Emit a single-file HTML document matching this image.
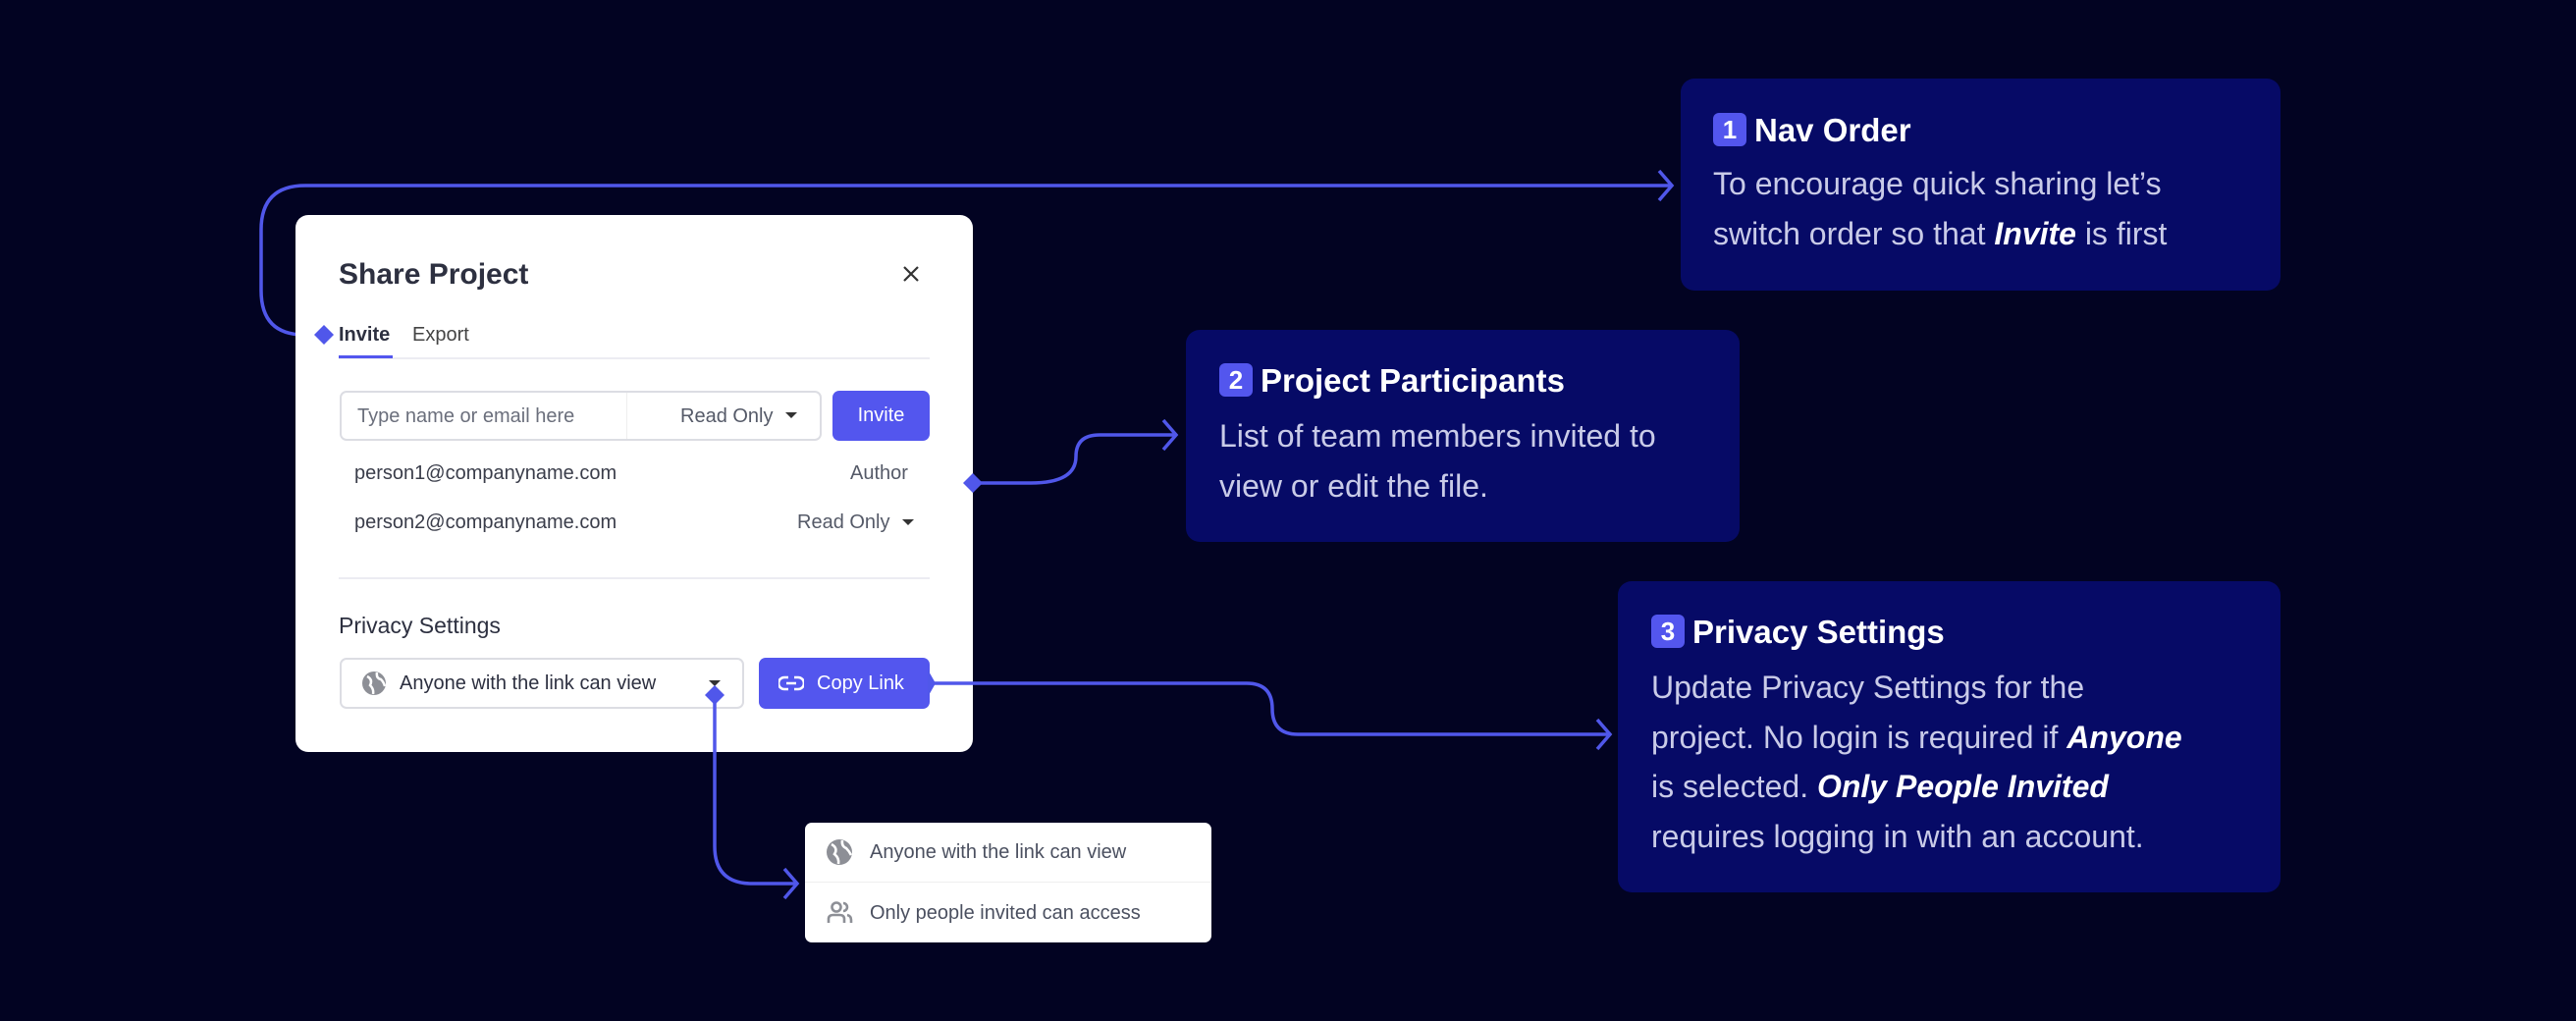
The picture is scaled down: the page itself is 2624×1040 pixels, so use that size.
<!DOCTYPE html>
<html><head><meta charset="utf-8"><style>
*{box-sizing:border-box;margin:0;padding:0}
body{width:2624px;height:1040px;background:#020322;font-family:"Liberation Sans",sans-serif;position:relative;overflow:hidden}
.a{position:absolute}
.modal{left:301px;top:219px;width:690px;height:547px;background:#fff;border-radius:13px}
.t{white-space:nowrap;line-height:1}
.card{background:#060a66;border-radius:14px}
.badge{display:inline-block;background:#5356ee;color:#fff;border-radius:6px;width:34px;height:34px;text-align:center;line-height:34px;font-size:26px;font-weight:bold;vertical-align:middle;margin-right:8px;position:relative;top:-3px}
.ct{color:#fff;font-weight:bold;font-size:33px}
.cb{color:#c9cbe8;font-size:32px;line-height:50.5px}
.cb b{color:#fff;font-style:italic}
.g{color:#4b5060;font-size:20px}
</style></head><body>
<svg class="a" style="left:0;top:0" width="2624" height="1040">
<g fill="none" stroke="#5057ea" stroke-width="3.5">
<path d="M330 341 H310 Q266 341 266 296 V234 Q266 189 311 189 H1703"/>
<path d="M1690 174 L1703 189 L1690 204"/>
<path d="M991 492 H1050 Q1096 492 1096 465 Q1096 443 1120 443 H1198"/>
<path d="M1185 428 L1198 443 L1185 458"/>
<path d="M1627 733 L1640 748 L1627 763"/>
<path d="M799 885 L812 900 L799 915"/>
</g>
</svg>
<div class="a modal">
<div class="a t" style="left:44px;top:46px;font-size:30px;color:#2d3040;font-weight:bold">Share Project</div>
<svg class="a" style="left:618px;top:51px" width="18" height="18"><path d="M2 2L16 16M16 2L2 16" stroke="#333" stroke-width="2.2"/></svg>
<div class="a t" style="left:44px;top:112px;font-size:20px;color:#2d3040;font-weight:bold">Invite</div>
<div class="a t" style="left:119px;top:112px;font-size:20px;color:#444">Export</div>
<div class="a" style="left:44px;top:145px;width:602px;height:2px;background:#ececf2"></div>
<div class="a" style="left:44px;top:143px;width:55px;height:3px;background:#5356ee"></div>
<div class="a" style="left:45px;top:179px;width:491px;height:51px;border:2px solid #dcdde3;border-radius:7px"></div>
<div class="a" style="left:337px;top:181px;width:1px;height:47px;background:#eee"></div>
<div class="a t g" style="left:63px;top:195px;color:#6b6f7c">Type name or email here</div>
<div class="a t g" style="left:392px;top:195px;color:#555a68">Read Only</div>
<svg class="a" style="left:499px;top:201px" width="12" height="8"><path d="M0 0H12L6 6Z" fill="#333"/></svg>
<div class="a t" style="left:547px;top:179px;width:99px;height:51px;background:#5356ee;border-radius:7px;color:#fff;font-size:20px;text-align:center;line-height:51px">Invite</div>
<div class="a t g" style="left:60px;top:253px;color:#3a3d4a">person1@companyname.com</div>
<div class="a t g" style="left:565px;top:253px;color:#555a68">Author</div>
<div class="a t g" style="left:60px;top:303px;color:#3a3d4a">person2@companyname.com</div>
<div class="a t g" style="left:511px;top:303px;color:#555a68">Read Only</div>
<svg class="a" style="left:618px;top:310px" width="12" height="8"><path d="M0 0H12L6 6Z" fill="#333"/></svg>
<div class="a" style="left:44px;top:369px;width:602px;height:2px;background:#ececf2"></div>
<div class="a t" style="left:44px;top:407px;font-size:23px;color:#2d3040">Privacy Settings</div>
<div class="a" style="left:45px;top:451px;width:412px;height:52px;border:2px solid #dcdde3;border-radius:7px"></div>
<svg class="a" style="left:67px;top:464px" width="26" height="26"><circle cx="13" cy="13" r="12" fill="#8d8f96"/><path d="M6 6Q12 9 9 15Q13 19 12 24M16 2Q15 8 20 9Q23 12 24 16" stroke="#fff" stroke-width="2.5" fill="none"/></svg>
<div class="a t g" style="left:106px;top:467px;color:#2d3040">Anyone with the link can view</div>
<svg class="a" style="left:421px;top:474px" width="12" height="8"><path d="M0 0H12L6 6Z" fill="#333"/></svg>
<div class="a" style="left:472px;top:451px;width:174px;height:52px;background:#5356ee;border-radius:7px"></div>
<svg class="a" style="left:492px;top:468px" width="26" height="18"><g fill="none" stroke="#fff" stroke-width="2.6"><path d="M10 3H6A6 6 0 0 0 6 15H10M16 3H20A6 6 0 0 1 20 15H16M8 9H18"/></g></svg>
<div class="a t" style="left:531px;top:467px;font-size:20px;color:#fff">Copy Link</div>
</div>
<svg class="a" style="left:0;top:0" width="2624" height="1040">
<g fill="none" stroke="#5057ea" stroke-width="3.5">
<path d="M947 696 H1270 Q1296 696 1296 722 Q1296 748 1322 748 H1640"/>
<path d="M728 708 V862 Q728 900 766 900 H812"/>
</g>
<g fill="#5057ea"><path d="M330 331L340 341L330 351L320 341Z"/><path d="M991 482L1001 492L991 502L981 492Z"/><path d="M728 698L738 708L728 718L718 708Z"/><path d="M945 682L953 696L945 710Z"/></g></svg>
<div class="a" style="left:820px;top:838px;width:414px;height:122px;background:#fff;border-radius:7px">
<svg class="a" style="left:21px;top:16px" width="28" height="28"><circle cx="14" cy="14" r="13" fill="#8d8f96"/><path d="M6 6Q13 10 9 16Q14 20 13 26M17 2Q16 8 21 10Q24 13 26 17" stroke="#fff" stroke-width="2.6" fill="none"/></svg>
<div class="a t g" style="left:66px;top:20px">Anyone with the link can view</div>
<div class="a" style="left:0;top:60px;width:414px;height:1px;background:#eee"></div>
<svg class="a" style="left:22px;top:80px" width="28" height="24"><g fill="none" stroke="#8d8f96" stroke-width="2.6"><circle cx="10" cy="6" r="4.5"/><path d="M2 22V18Q2 14 7 14H13Q18 14 18 18V22M17 2A4 4 0 0 1 17 10M21 14Q25 15 25 19V22"/></g></svg>
<div class="a t g" style="left:66px;top:82px">Only people invited can access</div>
</div>
<div class="a card" style="left:1712px;top:80px;width:611px;height:216px">
<div class="a t ct" style="left:33px;top:36px"><span class="badge">1</span>Nav Order</div>
<div class="a cb" style="left:33px;top:82px;white-space:nowrap">To encourage quick sharing let’s<br>switch order so that <b>Invite</b> is first</div>
</div>
<div class="a card" style="left:1208px;top:336px;width:564px;height:216px">
<div class="a t ct" style="left:34px;top:35px"><span class="badge">2</span>Project Participants</div>
<div class="a cb" style="left:34px;top:83px;white-space:nowrap">List of team members invited to<br>view or edit the file.</div>
</div>
<div class="a card" style="left:1648px;top:592px;width:675px;height:317px">
<div class="a t ct" style="left:34px;top:35px"><span class="badge">3</span>Privacy Settings</div>
<div class="a cb" style="left:34px;top:83px;white-space:nowrap">Update Privacy Settings for the<br>project. No login is required if <b>Anyone</b><br>is selected. <b>Only People Invited</b><br>requires logging in with an account.</div>
</div>
</body></html>
